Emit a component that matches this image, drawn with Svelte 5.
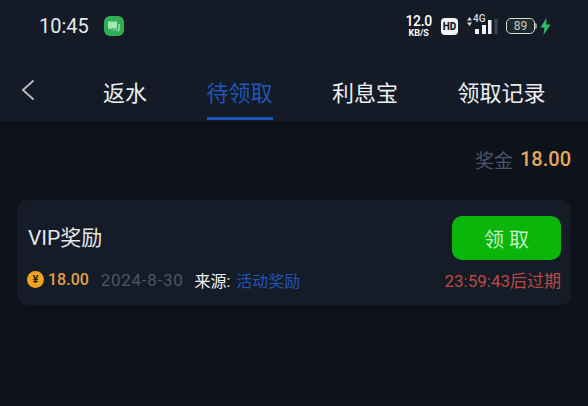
<script>
	const tabs = [
		{ label: '返水', active: false },
		{ label: '待领取', active: true },
		{ label: '利息宝', active: false },
		{ label: '领取记录', active: false }
	];
</script>

<div class="page">
	<header class="top">
		<!-- Status bar -->
		<div class="status">
			<span class="time">10:45</span>
			<span class="app-icon">
				<svg width="14" height="13" viewBox="0 0 14 13">
					<path d="M1 1.500h9v7H4.500L3 10V8.500H1z" fill="#a5e6b4" />
					<path d="M11 4h2v6.500h-1v1.500l-2-1.500H5.500V9.500H11z" fill="#7fd596" />
				</svg>
			</span>
			<div class="status-right">
				<div class="speed">
					<span class="speed-num">12.0</span>
					<span class="speed-unit">KB/S</span>
				</div>
				<span class="hd">HD</span>
				<div class="signal">
					<svg class="arrows" width="5" height="9" viewBox="0 0 5 9">
						<path d="M2.500 0 5 3.500H0ZM2.500 9 0 5.500H5Z" fill="#d8dade" />
					</svg>
					<span class="net">4G</span>
					<svg class="bars" width="23" height="16" viewBox="0 0 23 16">
						<rect x="0" y="10" width="4" height="5" fill="#f2f3f4" />
						<rect x="7" y="6" width="4" height="9" fill="#f2f3f4" />
						<rect x="13" y="1" width="3.500" height="14" fill="#f2f3f4" />
						<rect x="19.500" y="0" width="3" height="15" fill="#3f4651" />
					</svg>
				</div>
				<div class="battery">
					<span class="cell">89</span>
					<span class="nub"></span>
				</div>
				<svg class="bolt" width="11" height="17" viewBox="0 0 11 17">
					<path d="M6.500 0 0.500 9.500H4.500L3.500 17 10.500 6.500H6.200Z" fill="#2bc06c" />
				</svg>
			</div>
		</div>

		<!-- Tabs -->
		<nav class="nav">
			<svg class="back" width="14" height="22" viewBox="0 0 14 22">
				<path d="M12.500 1.500 2 11 12.500 20.500" fill="none" stroke="#b4b9c0" stroke-width="2" />
			</svg>
			<div class="tabs">
				{#each tabs as tab}
					<span class="tab" class:active={tab.active}>{tab.label}</span>
				{/each}
			</div>
		</nav>
	</header>

	<main class="content">
		<div class="total">
			<span class="total-label">奖金</span>
			<span class="total-value">18.00</span>
		</div>

		<div class="card">
			<div class="card-row">
				<span class="title">VIP奖励</span>
				<button class="claim">领 取</button>
			</div>
			<div class="card-row meta">
				<div class="info">
					<span class="amount">
						<span class="coin">¥</span>
						18.00
					</span>
					<span class="date">2024-8-30</span>
					<span class="source">来源: <em>活动奖励</em></span>
				</div>
				<span class="expire">23:59:43后过期</span>
			</div>
		</div>
	</main>
</div>

<style>
	:global(body) {
		margin: 0;
		background: #0e131b;
	}

	.page {
		width: 588px;
		height: 406px;
		overflow: hidden;
		background: #0e131b;
		font-family: Roboto, 'Noto Sans CJK SC', sans-serif;
		color: #e8eaed;
	}

	/* --- Header --- */
	.top {
		height: 121px;
		background: #141b26;
		box-sizing: border-box;
	}

	.status {
		height: 52px;
		display: flex;
		align-items: center;
		padding: 0 37px 0 39px;
		box-sizing: border-box;
	}

	.time {
		font-size: 20px;
		color: #e6e8ea;
	}

	.app-icon {
		width: 20px;
		height: 20px;
		margin-left: 15px;
		border-radius: 6px;
		background: #2fae58;
		display: flex;
		align-items: center;
		justify-content: center;
	}

	.status-right {
		margin-left: auto;
		display: flex;
		align-items: center;
		color: #fff;
	}

	.speed {
		display: flex;
		flex-direction: column;
		align-items: center;
		font-weight: 500;
	}
	.speed-num {
		font-size: 14px;
		line-height: 13px;
		letter-spacing: -0.3px;
	}
	.speed-unit {
		font-size: 9px;
		line-height: 10px;
		font-weight: 700;
	}

	.hd {
		width: 17px;
		height: 17px;
		margin-left: 9px;
		border-radius: 4px;
		background: #f4f5f6;
		color: #151c28;
		font-size: 10px;
		font-weight: 900;
		text-align: center;
		line-height: 17px;
	}

	/* icons overlap inside the signal block */
	.signal {
		position: relative;
		width: 31px;
		height: 20px;
		margin-left: 9px;
	}
	.arrows {
		position: absolute;
		left: 0;
		top: 1px;
	}
	.net {
		position: absolute;
		left: 6px;
		top: -3px;
		font-size: 10px;
		line-height: 12px;
		font-weight: 500;
		color: #d8dade;
	}
	.bars {
		position: absolute;
		left: 8px;
		top: 3px;
	}

	.battery {
		display: flex;
		align-items: center;
		margin-left: 8px;
	}
	.cell {
		width: 27px;
		height: 14px;
		border: 1.5px solid #d6d9dc;
		border-radius: 5px;
		background: #1c2a2a;
		color: #c8ccc8;
		font-size: 12px;
		line-height: 14px;
		text-align: center;
	}
	.nub {
		width: 2px;
		height: 6px;
		background: #8c9196;
		border-radius: 0 2px 2px 0;
	}
	.bolt {
		margin-left: 3px;
	}

	.nav {
		height: 69px;
		display: flex;
		align-items: flex-start;
		padding-left: 21px;
	}

	.back {
		margin-top: 27px;
	}

	.tabs {
		display: flex;
		gap: 59.5px;
		margin-left: 68px;
	}

	.tab {
		height: 68px;
		box-sizing: border-box;
		padding-top: 26px;
		font-size: 22px;
		line-height: 32px;
		color: #eceef0;
		border-bottom: 3px solid transparent;
	}

	.tab.active {
		color: #1f55b8;
		border-bottom-color: #1f55b8;
	}

	/* --- Content --- */
	.content {
		padding: 25px 17px 0 17px;
	}

	.total {
		display: flex;
		justify-content: flex-end;
		align-items: center;
		gap: 7px;
		height: 26px;
	}
	.total-label {
		font-size: 19px;
		color: #4b5468;
	}
	.total-value {
		font-size: 20px;
		font-weight: 500;
		color: #e6a85a;
	}

	.card {
		margin-top: 28px;
		height: 105px;
		box-sizing: border-box;
		padding: 16px 10px 0 10px;
		background: #151c27;
		border-radius: 10px;
	}

	.card-row {
		display: flex;
		justify-content: space-between;
		align-items: center;
	}

	.title {
		margin-left: 1px;
		padding-bottom: 5px;
		font-size: 21px;
		color: #e4e6e9;
	}

	.claim {
		width: 109px;
		height: 44px;
		border: none;
		border-radius: 10px;
		background: #0ab60a;
		color: #c8eec6;
		font-family: inherit;
		font-size: 20px;
		padding: 0;
	}

	.meta {
		margin-top: 7px;
	}

	.info {
		display: flex;
		align-items: center;
	}

	.amount {
		display: flex;
		align-items: center;
		gap: 4px;
		font-size: 16px;
		font-weight: 500;
		color: #e0a04a;
	}

	.coin {
		width: 17px;
		height: 17px;
		border-radius: 50%;
		background: #eda41e;
		color: #2a2010;
		font-size: 11px;
		font-weight: 700;
		line-height: 17px;
		text-align: center;
	}

	.date {
		margin-left: 12px;
		font-size: 17px;
		color: #4b5468;
		letter-spacing: 0.7px;
	}

	.source {
		margin-left: 11px;
		font-size: 16px;
		color: #eceef0;
	}
	.source em {
		margin-left: 2px;
		font-style: normal;
		color: #1f55b8;
	}

	.expire {
		font-size: 17px;
		color: #b84a45;
	}
</style>
